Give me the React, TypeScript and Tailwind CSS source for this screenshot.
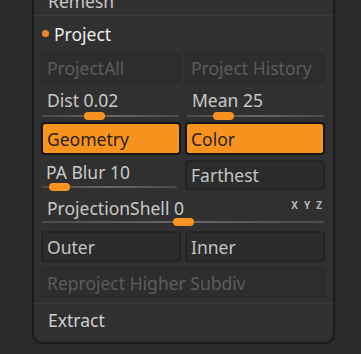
import React from "react";

const font = { fontFamily: '"Noto Sans", "Open Sans", sans-serif' };

function Btn({
  label,
  variant = "normal",
  className = "",
}: {
  label: string;
  variant?: "normal" | "disabled" | "active";
  className?: string;
}) {
  const styles = {
    normal: "bg-[#2c2c2c] border-[#242424] text-[#c4c4c4]",
    disabled: "bg-[#2d2d2d] border-[#2a2a2a] text-[#5c5c5c]",
    active: "bg-[#f7931e] border-[#151515] text-[#2a2218]",
  }[variant];
  return (
    <div
      className={`flex items-center whitespace-nowrap rounded-[4px] border-2 pl-[4px] text-[17.5px] leading-[20px] ${styles} ${className}`}
    >
      {label}
    </div>
  );
}

function Slider({
  label,
  pos,
  className = "",
  trackClass = "mt-[5px]",
}: {
  label: string;
  pos: number;
  className?: string;
  trackClass?: string;
}) {
  return (
    <div className={`flex flex-col ${className}`}>
      <div className="whitespace-nowrap pl-[5px] text-[17.5px] leading-[20px] text-[#c8c8c8]">{label}</div>
      <div
        className={`relative h-[2px] bg-gradient-to-r from-[#4a4a4a] via-[#686868] to-[#4a4a4a] ${trackClass}`}
      >
        <div
          className="absolute top-[-3px] h-[8px] w-[21px] rounded-[4px] bg-[#f7931e]"
          style={{ left: `${pos}%` }}
        />
      </div>
    </div>
  );
}

export default function App() {
  return (
    <div className="h-[354px] w-[361px] overflow-hidden bg-[#2a2a2a]" style={font}>
      <div className="ml-[32px] w-[303px] rounded-b-[10px] border-x-2 border-b-2 border-[#1b1b1b] bg-[#303030]">
        <div className="-mt-[9px] h-[24px] pl-[14px] text-[17.5px] leading-[20px] text-[#c8c8c8]">
          Remesh
        </div>
        <div className="h-[1px] bg-[#3b3b3b]" />
        <div className="flex flex-col px-[7px] pr-[8px]">
          <div className="flex h-[35px] items-center gap-[5px] pl-[1px]">
            <span className="h-[7px] w-[7px] rounded-full bg-[#e8862a]" />
            <span className="text-[17.5px] leading-[20px] text-[#ececec]">Project</span>
          </div>
          <div className="mt-[2px] grid grid-cols-2 gap-[4px]">
            <Btn label="ProjectAll" variant="disabled" className="h-[30px]" />
            <Btn label="Project History" variant="disabled" className="h-[30px]" />
          </div>
          <div className="mt-[7px] grid grid-cols-2 gap-[8px] px-[1px]">
            <Slider label="Dist 0.02" pos={31} />
            <Slider label="Mean 25" pos={19} />
          </div>
          <div className="mt-[5px] grid grid-cols-2 gap-[4px]">
            <Btn label="Geometry" variant="active" className="h-[33px]" />
            <Btn label="Color" variant="active" className="h-[33px]" />
          </div>
          <div className="mt-[5px] grid grid-cols-2 gap-[4px]">
            <Slider label="PA Blur 10" pos={6} className="pt-[2px] pr-[4px]" trackClass="mt-[4px]" />
            <Btn label="Farthest" className="h-[30px]" />
          </div>
          <div className="relative mt-[8px] px-[1px]">
            <Slider label="ProjectionShell 0" pos={46.5} trackClass="mt-[3px]" />
            <div className="absolute right-[3px] top-[2px] flex gap-[6px] text-[10px] font-bold leading-none text-[#b8b8b8]">
              <span>X</span>
              <span>Y</span>
              <span>Z</span>
            </div>
          </div>
          <div className="mt-[8px] grid grid-cols-2 gap-[4px]">
            <Btn label="Outer" className="h-[31px]" />
            <Btn label="Inner" className="h-[31px]" />
          </div>
          <Btn label="Reproject Higher Subdiv" variant="disabled" className="mt-[5px] h-[31px]" />
        </div>
        <div className="mt-[5px] h-[1px] bg-[#3b3b3b]" />
        <div className="h-[38px] pl-[14px] pt-[6px] text-[17.5px] leading-[20px] text-[#d0d0d0]">
          Extract
        </div>
      </div>
    </div>
  );
}
